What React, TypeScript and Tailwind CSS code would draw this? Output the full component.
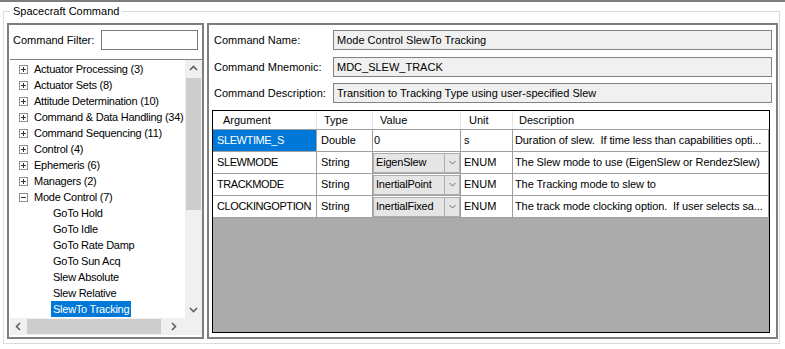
import React from "react"

const groups = [
	{ label: "Actuator Processing (3)", open: false },
	{ label: "Actuator Sets (8)", open: false },
	{ label: "Attitude Determination (10)", open: false },
	{ label: "Command & Data Handling (34)", open: false },
	{ label: "Command Sequencing (11)", open: false },
	{ label: "Control (4)", open: false },
	{ label: "Ephemeris (6)", open: false },
	{ label: "Managers (2)", open: false },
	{ label: "Mode Control (7)", open: true },
]

const modeCommands = [
	"GoTo Hold",
	"GoTo Idle",
	"GoTo Rate Damp",
	"GoTo Sun Acq",
	"Slew Absolute",
	"Slew Relative",
	"SlewTo Tracking",
]

const args = [
	{
		name: "SLEWTIME_S",
		type: "Double",
		value: "0",
		combo: false,
		unit: "s",
		desc: "Duration of slew.  If time less than capabilities opti...",
	},
	{
		name: "SLEWMODE",
		type: "String",
		value: "EigenSlew",
		combo: true,
		unit: "ENUM",
		desc: "The Slew mode to use (EigenSlew or RendezSlew)",
	},
	{
		name: "TRACKMODE",
		type: "String",
		value: "InertialPoint",
		combo: true,
		unit: "ENUM",
		desc: "The Tracking mode to slew to",
	},
	{
		name: "CLOCKINGOPTION",
		type: "String",
		value: "InertialFixed",
		combo: true,
		unit: "ENUM",
		desc: "The track mode clocking option.  If user selects sa...",
	},
]

function Chevron({ dir }: { dir: "up" | "down" | "left" | "right" }) {
	const pts = {
		up: "1,6 4.5,2.5 8,6",
		down: "1,3 4.5,6.5 8,3",
		left: "6,1 2.5,4.5 6,8",
		right: "3,1 6.5,4.5 3,8",
	}[dir]
	return (
		<svg width="9" height="9" viewBox="0 0 9 9">
			<polyline
				points={pts}
				fill="none"
				stroke="#606060"
				strokeWidth="1.6"
			/>
		</svg>
	)
}

function ExpandBox({ open }: { open: boolean }) {
	return (
		<svg width="9" height="9" viewBox="0 0 9 9" className="ml-[9px] shrink-0">
			<rect x="0.5" y="0.5" width="8" height="8" fill="#fff" stroke="#919191" />
			<line x1="2" y1="4.5" x2="7" y2="4.5" stroke="#333" />
			{!open && <line x1="4.5" y1="2" x2="4.5" y2="7" stroke="#333" />}
		</svg>
	)
}

function TextRow({ label, value }: { label: string; value: string }) {
	return (
		<div className="flex items-center h-[20px]">
			<div className="w-[119px] shrink-0">{label}</div>
			<div className="flex-1 h-full bg-[#f0f0f0] border border-[#828282] flex items-center pl-[3px] whitespace-nowrap">
				{value}
			</div>
		</div>
	)
}

const cols = [
	{ w: "w-[104px]", head: "Argument", hp: "pl-[10px]" },
	{ w: "w-[56px]", head: "Type", hp: "pl-[7px]" },
	{ w: "w-[88px]", head: "Value", hp: "pl-[7px]" },
	{ w: "w-[52px]", head: "Unit", hp: "pl-[8px]" },
	{ w: "w-[256px]", head: "Description", hp: "pl-[6px]" },
]

export default function App() {
	return (
		<div className="w-[785px] h-[349px] bg-white border-t-2 border-[#7d7d7d] overflow-hidden font-['Liberation_Sans',Arial,sans-serif] text-[11px] text-black">
			<fieldset className="mt-[3px] ml-[3px] w-[777px] h-[339px] border border-[#dcdcdc] pl-[3px] pt-[5px]">
				<legend className="ml-[3px] px-[3px] leading-[13px]">
					Spacecraft Command
				</legend>
				<div className="flex gap-[3px]">
					{/* Command tree */}
					<div className="w-[197px] h-[316px] border-2 border-[#7f7f7f] flex flex-col">
						<div className="flex items-center justify-between h-[20px] mt-[5px] pl-[4px] pr-[4px]">
							<span>Command Filter:</span>
							<div className="w-[97px] h-[20px] border border-[#7a7a7a] bg-white" />
						</div>
						<div className="mt-[9px] ml-px mb-[2px] flex-1 border-t border-[#828282] flex flex-col">
							<div className="flex flex-1 min-h-0">
								<div className="flex-1 pt-px overflow-hidden tracking-[-0.25px]">
									{groups.map((g) => (
										<div key={g.label} className="flex items-center h-[16px] whitespace-nowrap">
											<ExpandBox open={g.open} />
											<span className="ml-[6px]">{g.label}</span>
										</div>
									))}
									{modeCommands.map((c) => (
										<div key={c} className="flex items-center h-[16px] pl-[41px] whitespace-nowrap">
											<span
												className={
													c === "SlewTo Tracking"
														? "bg-[#0078d7] text-white px-[2px] h-[16px] leading-[16px]"
														: "px-[2px]"
												}
											>
												{c}
											</span>
										</div>
									))}
								</div>
								<div className="w-[17px] bg-[#f0f0f0] flex flex-col items-center">
									<div className="h-[17px] flex items-center justify-center">
										<Chevron dir="up" />
									</div>
									<div className="w-[15px] h-[132px] mt-px bg-[#cdcdcd]" />
									<div className="flex-1" />
									<div className="h-[17px] flex items-center justify-center">
										<Chevron dir="down" />
									</div>
								</div>
							</div>
							<div className="flex h-[17px]">
								<div className="flex-1 bg-[#f0f0f0] flex items-center">
									<div className="w-[17px] flex justify-center">
										<Chevron dir="left" />
									</div>
									<div className="w-[134px] h-[15px] bg-[#cdcdcd]" />
									<div className="flex-1 flex justify-center">
										<Chevron dir="right" />
									</div>
								</div>
								<div className="w-[17px] bg-[#f0f0f0]" />
							</div>
						</div>
					</div>

					{/* Command details */}
					<div className="w-[571px] h-[316px] border-2 border-[#7f7f7f] pl-[5px] pr-[4px]">
						<div className="mt-[5px]">
							<TextRow label="Command Name:" value="Mode Control SlewTo Tracking" />
						</div>
						<div className="mt-[7px]">
							<TextRow label="Command Mnemonic:" value="MDC_SLEW_TRACK" />
						</div>
						<div className="mt-[6px]">
							<TextRow
								label="Command Description:"
								value="Transition to Tracking Type using user-specified Slew"
							/>
						</div>
						<div className="mt-[7px] -ml-[2px] w-[558px] h-[223px] border border-black bg-[#ababab]">
							<div className="flex h-[19px] bg-white border-b border-[#a0a0a0]">
								{cols.map((c, i) => (
									<div
										key={c.head}
										className={`${c.w} ${c.hp} flex items-center ${i < 4 ? "border-r border-[#e5e5e5]" : ""}`}
									>
										{c.head}
									</div>
								))}
							</div>
							{args.map((a, r) => (
								<div key={a.name} className="flex h-[22px] bg-white border-b border-[#a0a0a0]">
									<div
										className={`w-[104px] pl-[4px] flex items-center border-r border-[#a0a0a0] whitespace-nowrap overflow-hidden tracking-[-0.4px] ${
											r === 0 ? "bg-[#0078d7] text-white" : ""
										}`}
									>
										{a.name}
									</div>
									<div className="w-[56px] pl-[4px] flex items-center border-r border-[#a0a0a0]">
										{a.type}
									</div>
									<div className="w-[88px] flex items-center border-r border-[#a0a0a0]">
										{a.combo ? (
											<div className="w-[87px] h-[20px] bg-[#e5e5e5] border border-[#adadad] flex">
												<div className="flex-1 pl-[2px] flex items-center whitespace-nowrap tracking-[-0.2px]">
													{a.value}
												</div>
												<div className="w-[15px] border-l border-[#adadad] flex items-center justify-center">
													<svg width="7" height="5" viewBox="0 0 7 5">
														<polyline points="0.5,1 3.5,4 6.5,1" fill="none" stroke="#6d6d6d" strokeWidth="1" />
													</svg>
												</div>
											</div>
										) : (
											<span className="pl-[1px]">{a.value}</span>
										)}
									</div>
									<div className="w-[52px] pl-[3px] flex items-center border-r border-[#a0a0a0]">
										{a.unit}
									</div>
									<div className="w-[256px] pl-[2px] flex items-center border-r border-[#a0a0a0] whitespace-pre overflow-hidden tracking-[-0.1px]">
										{a.desc}
									</div>
								</div>
							))}
						</div>
					</div>
				</div>
			</fieldset>
		</div>
	)
}
